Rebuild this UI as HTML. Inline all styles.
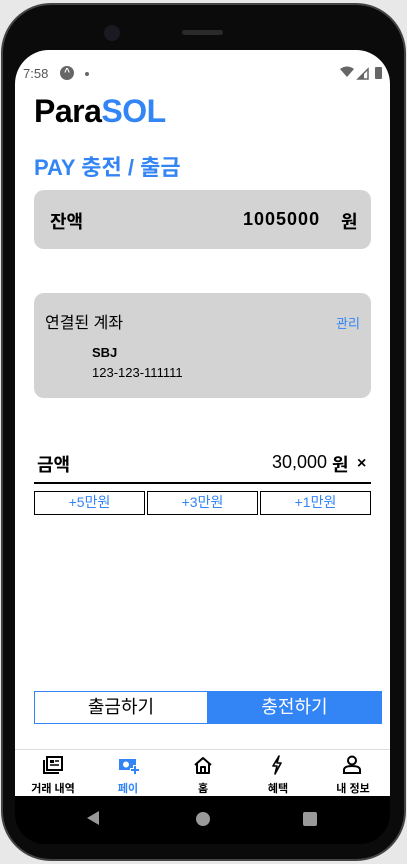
<!DOCTYPE html>
<html><head><meta charset="utf-8"><style>
*{margin:0;padding:0;box-sizing:border-box}
html,body{width:407px;height:864px;overflow:hidden;background:#e8e8e8;font-family:"Liberation Sans","Noto Sans CJK KR",sans-serif}
.frame{position:absolute;left:1px;top:3px;width:405px;height:858px;background:#0b0b0c;border-radius:50px;border:2px solid #444}
.screen{position:absolute;left:15px;top:50px;width:375px;height:746px;background:#fff;border-radius:34px 34px 0 0;overflow:hidden}
.nav{position:absolute;left:15px;top:796px;width:375px;height:48px;background:#000;border-radius:0 0 30px 30px}
.a{position:absolute;white-space:nowrap}
.blue{color:#3385f5}
.box{position:absolute;background:#d3d3d3;border-radius:10px}
.qb{position:absolute;top:491px;width:111px;height:24px;border:1.5px solid #000;color:#3385f5;font-size:14px;text-align:center;line-height:21px}
.lbl{position:absolute;top:780px;font-size:11px;font-weight:bold;width:60px;text-align:center}
</style></head><body>
<div class="frame"></div>
<div class="a" style="left:104px;top:25px;width:16px;height:16px;border-radius:50%;background:#1a1a22"></div>
<div class="a" style="left:182px;top:30px;width:41px;height:5px;border-radius:3px;background:#2a2a2a"></div>
<div class="screen"></div>
<div class="nav"></div>
<!-- status bar -->
<div class="a" style="left:23px;top:66px;font-size:13px;color:#555">7:58</div>
<div class="a" style="left:60px;top:66px;width:14px;height:14px;border-radius:50%;background:#666;color:#fff;font-size:10px;text-align:center;line-height:14px;font-weight:bold">^</div>
<div class="a" style="left:85px;top:72px;width:4px;height:4px;border-radius:50%;background:#666"></div>
<svg class="a" style="left:340px;top:66px" width="32" height="14"><path d="M0 3 Q7 -2 14 3 L7 11Z" fill="#666"/><path d="M18 13 L28 3 L28 13Z" fill="none" stroke="#666" stroke-width="1.5"/><path d="M18 13 L24 7 L24 13Z" fill="#666"/></svg>
<div class="a" style="left:375px;top:67px;width:7px;height:12px;background:#666;border-radius:1px"></div>
<!-- titles -->
<div class="a" style="left:34px;top:93px;font-size:32px;font-weight:bold;letter-spacing:-0.5px">Para<span class="blue">SOL</span></div>
<div class="a blue" style="left:34px;top:150px;font-size:22px;font-weight:bold">PAY 충전 / 출금</div>
<!-- balance -->
<div class="box" style="left:34px;top:190px;width:337px;height:59px"></div>
<div class="a" style="left:50px;top:208px;font-size:18px;font-weight:bold">잔액</div>
<div class="a" style="left:243px;top:209px;font-size:18px;font-weight:bold;letter-spacing:1px">1005000</div>
<div class="a" style="left:341px;top:208px;font-size:18px;font-weight:bold">원</div>
<!-- account -->
<div class="box" style="left:34px;top:293px;width:337px;height:105px"></div>
<div class="a" style="left:45px;top:309px;font-size:16px">연결된 계좌</div>
<div class="a blue" style="left:336px;top:313px;font-size:13px">관리</div>
<div class="a" style="left:92px;top:345px;font-size:13px;font-weight:bold">SBJ</div>
<div class="a" style="left:92px;top:365px;font-size:13px">123-123-111111</div>
<!-- amount -->
<div class="a" style="left:37px;top:451px;font-size:18px;font-weight:bold">금액</div>
<div class="a" style="left:272px;top:452px;font-size:18px">30,000</div>
<div class="a" style="left:332px;top:451px;font-size:18px;font-weight:bold">원</div>
<div class="a" style="left:357px;top:455px;font-size:16px;font-weight:bold">×</div>
<div class="a" style="left:34px;top:482px;width:337px;height:2px;background:#000"></div>
<div class="qb" style="left:34px">+5만원</div>
<div class="qb" style="left:147px">+3만원</div>
<div class="qb" style="left:260px">+1만원</div>
<!-- action buttons -->
<div class="a" style="left:34px;top:691px;width:174px;height:33px;border:1.5px solid #3385f5;font-size:18px;text-align:center;line-height:30px">출금하기</div>
<div class="a" style="left:207px;top:691px;width:175px;height:33px;background:#3385f5;color:#fff;font-size:18px;text-align:center;line-height:33px">충전하기</div>
<!-- tab bar -->
<div class="a" style="left:15px;top:749px;width:375px;height:1px;background:#ddd"></div>
<svg class="a" style="left:43px;top:756px" width="20" height="18"><rect x="4" y="1" width="15" height="13" fill="none" stroke="#000" stroke-width="2"/><path d="M1 4 V17 H16" fill="none" stroke="#000" stroke-width="2"/><rect x="7" y="4" width="4" height="3" fill="#000"/><path d="M7 9 H16 M12 5 H16" stroke="#000" stroke-width="1.5"/></svg>
<svg class="a" style="left:118px;top:757px" width="22" height="18"><rect x="1" y="2" width="17" height="11" fill="#3385f5"/><circle cx="8" cy="7.5" r="3" fill="#fff"/><path d="M17 8 V18 M12 13 H22" stroke="#fff" stroke-width="4"/><path d="M17 9 V17 M13 13 H21" stroke="#3385f5" stroke-width="2"/></svg>
<svg class="a" style="left:193px;top:756px" width="20" height="18"><path d="M2 9 L10 2 L18 9 M4 7.5 V17 H16 V7.5 M8 17 V11 H12 V17" fill="none" stroke="#000" stroke-width="2" stroke-linejoin="round"/></svg>
<svg class="a" style="left:270px;top:755px" width="14" height="20"><path d="M9 1 L3 11 H7 L5 19 L11 8 H7 Z" fill="none" stroke="#000" stroke-width="1.6" stroke-linejoin="round"/></svg>
<svg class="a" style="left:342px;top:755px" width="20" height="20"><circle cx="10" cy="5.5" r="4" fill="none" stroke="#000" stroke-width="2"/><path d="M2 18 V15 Q2 11 10 11 Q18 11 18 15 V18 Z" fill="none" stroke="#000" stroke-width="2"/></svg>
<div class="lbl" style="left:23px">거래 내역</div>
<div class="lbl blue" style="left:98px">페이</div>
<div class="lbl" style="left:173px">홈</div>
<div class="lbl" style="left:248px">혜택</div>
<div class="lbl" style="left:323px">내 정보</div>
<!-- soft keys -->
<svg class="a" style="left:86px;top:810px" width="14" height="16"><path d="M13 1 L13 15 L1 8 Z" fill="#999"/></svg>
<div class="a" style="left:196px;top:812px;width:14px;height:14px;border-radius:50%;background:#999"></div>
<div class="a" style="left:303px;top:812px;width:14px;height:14px;border-radius:2px;background:#999"></div>
</body></html>
